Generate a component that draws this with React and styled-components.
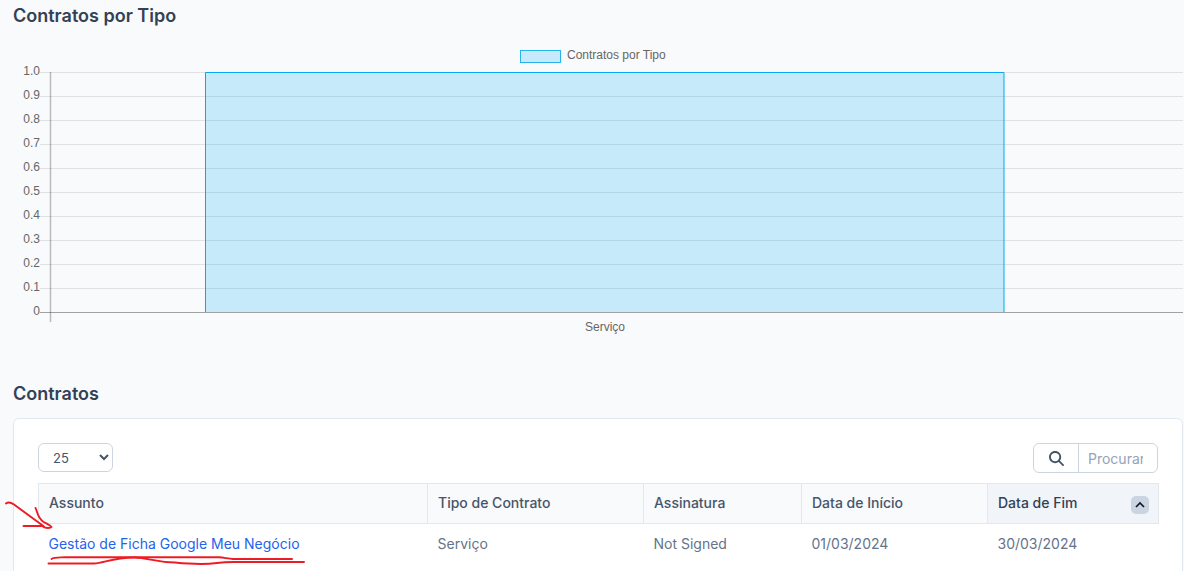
import styled, { createGlobalStyle } from 'styled-components';
import { FaMagnifyingGlass } from 'react-icons/fa6';

const GlobalStyle = createGlobalStyle`
  * {
    box-sizing: border-box;
  }
  body {
    margin: 0;
    background-color: #f8fafc;
    font-family: Inter, sans-serif;
    font-size: 14px;
    color: #64748b;
  }
`;

const Page = styled.main`
  height: 100vh;
  overflow: hidden;
  padding: 2px 1px 0 13px;
`;

const Title = styled.h2`
  margin: 0;
  font-size: 18px;
  line-height: 28px;
  font-weight: 600;
  color: #334155;
`;

const ChartSection = styled.section`
  margin-bottom: 38px;
`;

const Chart = styled.svg`
  display: block;
  width: 100%;
  margin-top: 12px;
  font-family: "Liberation Sans", Arial, sans-serif;
  font-size: 12px;
  fill: #666;
`;

const Card = styled.div`
  margin-top: 10px;
  padding: 24px;
  background-color: #fff;
  border: 1px solid #e2e8f0;
  border-radius: 6px;
`;

const Toolbar = styled.div`
  display: flex;
  align-items: flex-start;
  justify-content: space-between;
  margin-bottom: 10px;
`;

const PageSize = styled.select`
  width: 75px;
  height: 29px;
  padding: 0 0 0 10px;
  font-family: inherit;
  font-size: 13px;
  color: #475569;
  background-color: #fff;
  border: 1px solid #cbd5e1;
  border-radius: 6px;
`;

const SearchGroup = styled.div`
  display: flex;
  width: 125px;
  height: 30px;
  background-color: #fff;
  border: 1px solid #cbd5e1;
  border-radius: 6px;
  overflow: hidden;
`;

const SearchButton = styled.button`
  display: flex;
  align-items: center;
  justify-content: center;
  flex: 0 0 45px;
  padding: 0;
  font-size: 15px;
  color: #475569;
  background: none;
  border: 0;
  border-right: 1px solid #cbd5e1;
`;

const SearchInput = styled.input`
  flex: 1;
  min-width: 0;
  padding: 0 14px 0 9px;
  font-family: inherit;
  font-size: 14px;
  color: #475569;
  background: none;
  border: 0;
  &::placeholder {
    color: #94a3b8;
  }
`;

const Table = styled.table`
  width: 100%;
  table-layout: fixed;
  border-collapse: collapse;
`;

const Th = styled.th`
  width: ${({ $width }) => $width}px;
  height: 40px;
  padding: 0 10px 2px;
  text-align: left;
  font-weight: 500;
  color: ${({ $sorted }) => ($sorted ? '#334155' : '#475569')};
  background-color: ${({ $sorted }) => ($sorted ? '#f1f5f9' : '#f8fafc')};
  border: 1px solid #e2e8f0;
`;

const ThContent = styled.div`
  display: flex;
  align-items: center;
  justify-content: space-between;
`;

const SortButton = styled.button`
  display: flex;
  align-items: center;
  justify-content: center;
  width: 18px;
  height: 18px;
  margin: 4px -1px 0 0;
  padding: 0;
  color: #0f172a;
  background-color: #cbd5e1;
  border: 0;
  border-radius: 5px;
`;

const Td = styled.td`
  height: 40px;
  padding: 0 10px;
`;

const ContractLink = styled.a`
  position: relative;
  color: #2563eb;
  text-decoration: none;
`;

// red pen marks over the contract name
const PenMarks = styled.svg`
  position: absolute;
  top: -35px;
  left: -45px;
  pointer-events: none;
`;

const columns = [
  { label: 'Assunto', width: 389 },
  { label: 'Tipo de Contrato', width: 216 },
  { label: 'Assinatura', width: 158 },
  { label: 'Data de Início', width: 186 },
  { label: 'Data de Fim', width: 171, sorted: true },
];

const ticks = ['1.0', '0.9', '0.8', '0.7', '0.6', '0.5', '0.4', '0.3', '0.2', '0.1', '0'];

const TypeChart = () => {
  return (
    <Chart viewBox="0 0 1170 300" role="img" aria-label="Contratos por Tipo">
      <rect x="507.5" y="8.5" width="40" height="12" fill="#c6eafb" stroke="#28b3ee" />
      <text x="554" y="17">Contratos por Tipo</text>
      {ticks.map((tick, i) => (
        <g key={tick}>
          <path d={`M27 ${30.5 + i * 24}H1170`} stroke={tick === '0' ? '#a0a2a4' : '#dfe1e3'} />
          <text x="27" y={33 + i * 24} textAnchor="end">{tick}</text>
        </g>
      ))}
      <path d="M37.5 30V280" stroke="#000" strokeOpacity="0.25" strokeWidth="1.5" />
      <rect x="192" y="30" width="799" height="240" fill="#03a9f4" fillOpacity="0.2" />
      <path d="M192.5 270V30.5H991V270" fill="none" stroke="#03a9f4" />
      <text x="592" y="289" textAnchor="middle">Serviço</text>
    </Chart>
  );
};

const ContractsTable = () => {
  return (
    <Table>
      <thead>
        <tr>
          {columns.map(({ label, width, sorted }) => (
            <Th key={label} $width={width} $sorted={sorted} aria-sort={sorted ? 'ascending' : undefined}>
              <ThContent>
                {label}
                {sorted && (
                  <SortButton type="button" aria-label="Ordenar">
                    <svg width="10" height="10" viewBox="0 0 10 10" fill="none" stroke="currentColor" strokeWidth="1.7">
                      <path d="M1 7L5 3L9 7" />
                    </svg>
                  </SortButton>
                )}
              </ThContent>
            </Th>
          ))}
        </tr>
      </thead>
      <tbody>
        <tr>
          <Td>
            <ContractLink href="#">
              Gestão de Ficha Google Meu Negócio
              <PenMarks width="304" height="70" viewBox="4 500 304 70" fill="none" stroke="#ed1c24" strokeWidth="1.9" strokeLinecap="round" strokeLinejoin="round" aria-hidden="true">
                <path d="M6 503.500C8 502 11 502.500 14 504.500L44 526.500" />
                <path d="M35.500 508C38 514 38 518 43 521.500C47 524 50 525 51.500 527C49 528.500 45 528 42 526L23.500 526" />
                <path d="M51.500 559C54 557 58 557.500 65 557.300H219C224 557.500 228 558.800 233 559H292" />
                <path d="M48.500 563.500H94C104 563 113 557.500 134 557.500C148 557.500 154 562 175 562.500C190 564 202 565 217 563C224 562 228 562 234 562H304" />
              </PenMarks>
            </ContractLink>
          </Td>
          <Td>Serviço</Td>
          <Td>Not Signed</Td>
          <Td>01/03/2024</Td>
          <Td>30/03/2024</Td>
        </tr>
      </tbody>
    </Table>
  );
};

const App = () => {
  return (
    <>
      <GlobalStyle />
      <Page>
        <ChartSection>
          <Title>Contratos por Tipo</Title>
          <TypeChart />
        </ChartSection>
        <section>
          <Title>Contratos</Title>
          <Card>
            <Toolbar>
              <PageSize aria-label="Registros por página" defaultValue="25">
                <option>10</option>
                <option>25</option>
                <option>50</option>
                <option>100</option>
              </PageSize>
              <SearchGroup>
                <SearchButton type="button" aria-label="Procurar">
                  <FaMagnifyingGlass />
                </SearchButton>
                <SearchInput type="text" placeholder="Procurar" aria-label="Procurar" />
              </SearchGroup>
            </Toolbar>
            <ContractsTable />
          </Card>
        </section>
      </Page>
    </>
  );
};

export default App;
